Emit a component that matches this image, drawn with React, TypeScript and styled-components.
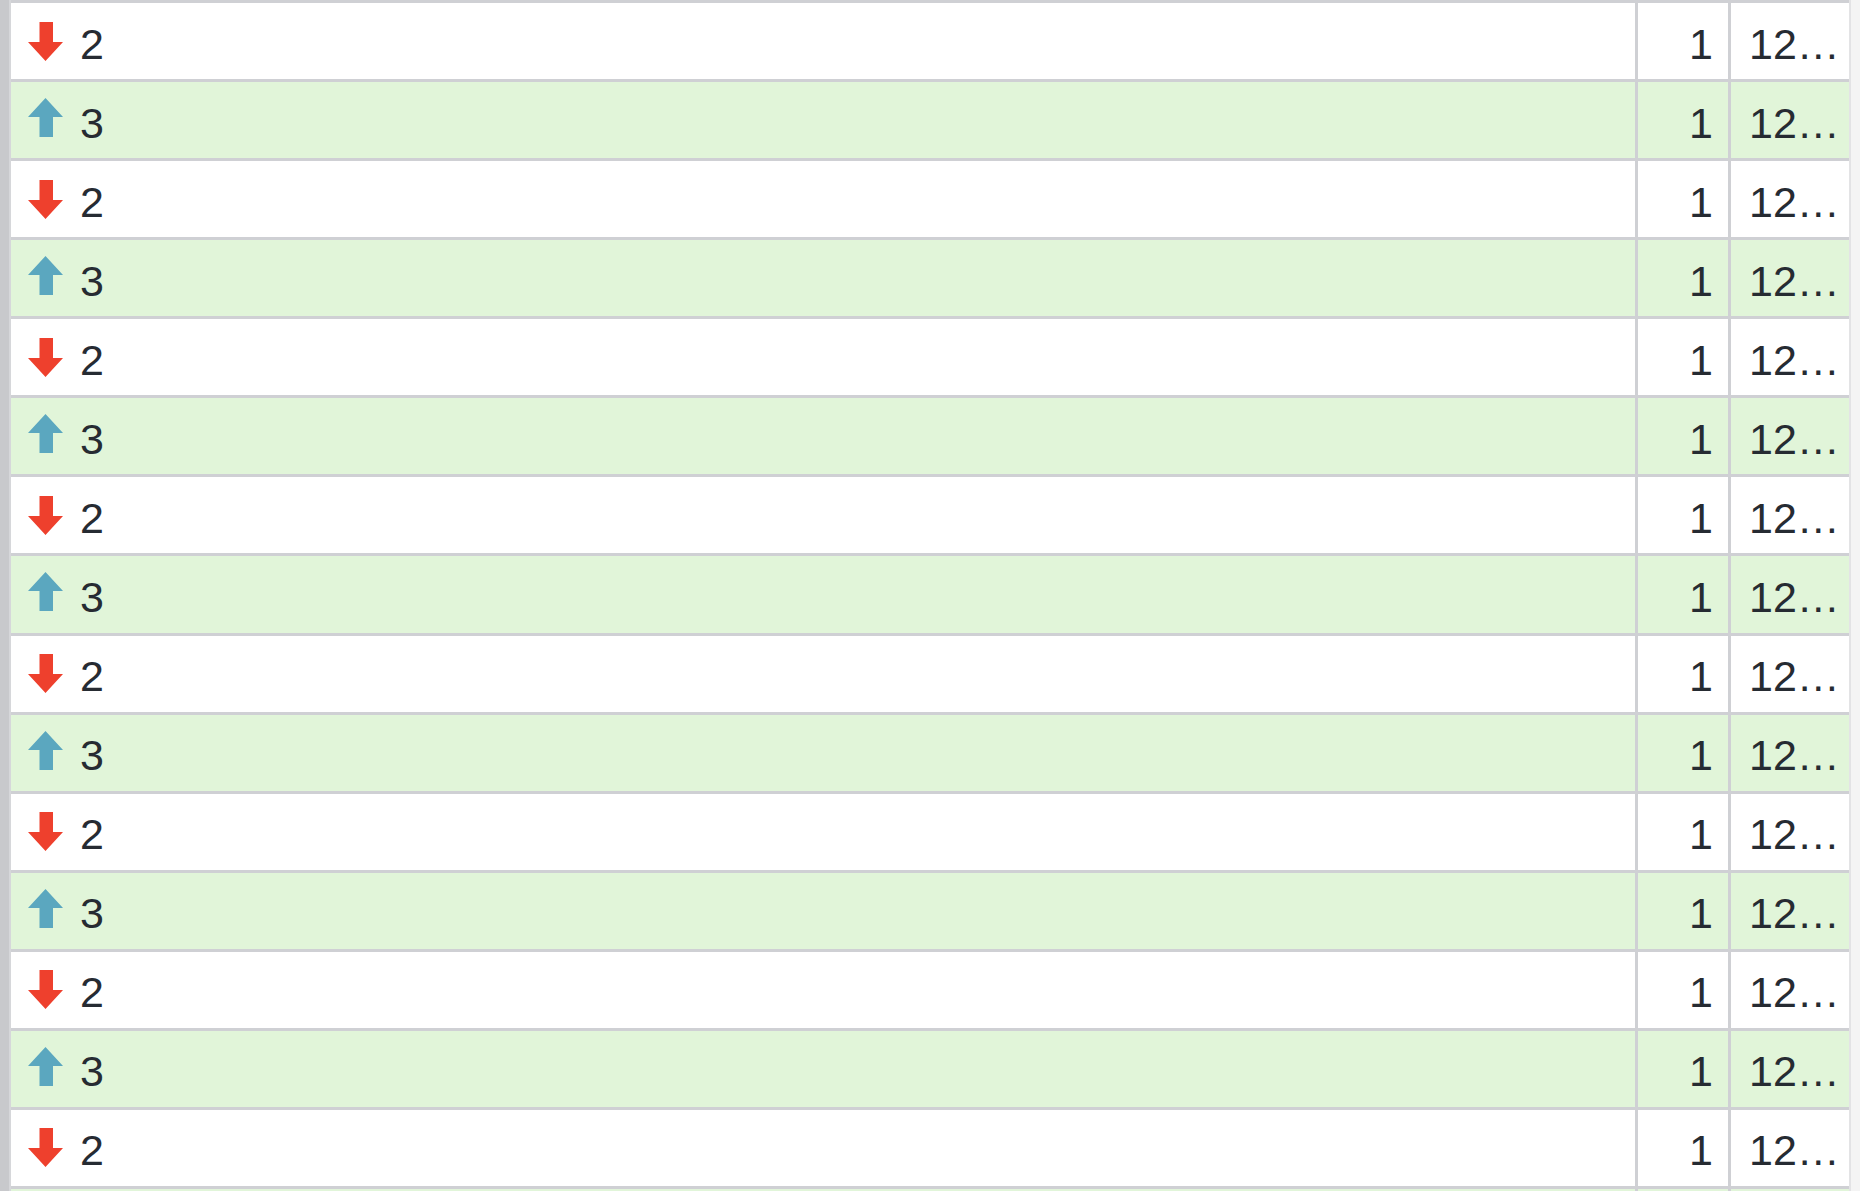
import styled, { createGlobalStyle } from "styled-components";

const GlobalStyle = createGlobalStyle`
  html, body {
    margin: 0;
    padding: 0;
    background: #ffffff;
    overflow: hidden;
  }
  * {
    box-sizing: border-box;
  }
`;

const Page = styled.div`
  display: flex;
  height: 100vh;
  overflow: hidden;
  font-family: "Liberation Sans", Arial, Helvetica, sans-serif;
  color: #262b32;
`;

/* grey strip down the left edge */
const Rail = styled.div`
  flex: 0 0 11px;
  background: #c8c9cc;
  border-right: 2px solid #d6d7da;
`;

const Grid = styled.div`
  flex: 1;
  display: flex;
  flex-direction: column;
  border-top: 3px solid #cfd0d4;
  min-width: 0;
`;

/* scrollbar track on the right */
const Track = styled.div`
  flex: 0 0 11px;
  background: #f4f4f4;
  border-left: 2px solid #e3e3e5;
`;

const Row = styled.div<{ $alt: boolean }>`
  flex: 0 0 auto;
  display: grid;
  grid-template-columns: 1fr 93px 121px;
  height: 79.07px;
  border-bottom: 3px solid #cfd0d4;
  background: ${({ $alt }) => ($alt ? "#e1f5d9" : "#ffffff")};
`;

const Cell = styled.div<{ $align?: "left" | "right" }>`
  display: flex;
  align-items: center;
  justify-content: ${({ $align }) => ($align === "right" ? "flex-end" : "flex-start")};
  min-width: 0;
  overflow: hidden;
  & + & {
    border-left: 3px solid #cfd0d4;
  }
`;

const TypeCell = styled(Cell)`
  padding-left: 17px;
  gap: 17px;
`;

const CountCell = styled(Cell)`
  padding-right: 15px;
`;

const TimeCell = styled(Cell)`
  padding-left: 18px;
  padding-right: 4px;
`;

const Label = styled.span`
  font-size: 43px;
  line-height: normal;
  padding-top: 6px;
  white-space: nowrap;
  overflow: hidden;
  text-overflow: ellipsis;
`;

const ArrowSvg = styled.svg<{ $up: boolean }>`
  flex: 0 0 auto;
  width: 35px;
  height: 39px;
  margin-bottom: ${({ $up }) => ($up ? "5px" : "0")};
`;

const Arrow = ({ up }: { up: boolean }) => (
  <ArrowSvg $up={up} viewBox="0 0 35 39">
    {up ? (
      <polygon
        points="17.5,0 35,19 25,19 25,39 11.5,39 11.5,19 0,19"
        fill="#5ba7bf"
      />
    ) : (
      <polygon
        points="11.5,0 25,0 25,20 35,20 17.5,39 0,20 11.5,20"
        fill="#ee402d"
      />
    )}
  </ArrowSvg>
);

// the time column is shown truncated in the grid
const rows = Array.from({ length: 15 }, (_, i) => ({
  up: i % 2 === 1,
  value: i % 2 === 1 ? 3 : 2,
  count: 1,
  time: "12\u2026",
}));

export default function App() {
  return (
    <>
      <GlobalStyle />
      <Page>
        <Rail />
        <Grid>
          {rows.map((r, i) => (
            <Row key={i} $alt={r.up}>
              <TypeCell>
                <Arrow up={r.up} />
                <Label>{r.value}</Label>
              </TypeCell>
              <CountCell $align="right">
                <Label>{r.count}</Label>
              </CountCell>
              <TimeCell>
                <Label>{r.time}</Label>
              </TimeCell>
            </Row>
          ))}
          {/* next row, only its top edge is in view */}
          <Row $alt>
            <Cell />
            <Cell />
            <Cell />
          </Row>
        </Grid>
        <Track />
      </Page>
    </>
  );
}
